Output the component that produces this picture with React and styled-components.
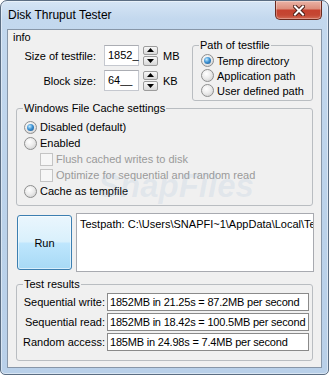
import styled, { createGlobalStyle, css } from "styled-components";

const GlobalStyle = createGlobalStyle`
  * { box-sizing: border-box; }
  html, body { margin: 0; padding: 0; background: #ffffff; }
  body {
    font-family: "Liberation Sans", Arial, sans-serif;
    font-size: 11px;
    color: #000;
  }
`;

const fileRows = [
  { label: "Size of testfile:", value: "1852_", unit: "MB" },
  { label: "Block size:", value: "64__", unit: "KB" },
];

const pathOptions = [
  { label: "Temp directory", checked: true },
  { label: "Application path" },
  { label: "User defined path" },
];

const results = [
  { label: "Sequential write:", value: "1852MB in 21.25s = 87.2MB per second" },
  { label: "Sequential read:", value: "1852MB in 18.42s = 100.5MB per second" },
  { label: "Random access:", value: "185MB in 24.98s = 7.4MB per second" },
];

function Arrow({ up }) {
  return (
    <svg width="7" height="4" viewBox="0 0 7 4">
      <polygon points={up ? "0,4 7,4 3.5,0" : "0,0 7,0 3.5,4"} fill="#000" />
    </svg>
  );
}

export default function App() {
  return (
    <>
      <GlobalStyle />
      <Window>
        <TitleBar>
          <Title>Disk Thruput Tester</Title>
          <CloseButton aria-label="Close">
            <svg width="12" height="11" viewBox="0 0 12 11">
              <path d="M2 1.5 L10 9.5 M10 1.5 L2 9.5" stroke="#4a1c14" strokeWidth="4" strokeLinecap="square" />
              <path d="M2 1.5 L10 9.5 M10 1.5 L2 9.5" stroke="#ffffff" strokeWidth="2" strokeLinecap="square" />
            </svg>
          </CloseButton>
        </TitleBar>

        <Client>
          <TopRow>
            <InfoColumn>
              <InfoCaption>info</InfoCaption>
              {fileRows.map((row) => (
                <FieldRow key={row.label}>
                  <FieldLabel>{row.label}</FieldLabel>
                  <NumberBox>{row.value}</NumberBox>
                  <Spinner>
                    <SpinHalf><Arrow up /></SpinHalf>
                    <SpinHalf><Arrow /></SpinHalf>
                  </Spinner>
                  <Unit>{row.unit}</Unit>
                </FieldRow>
              ))}
            </InfoColumn>

            <GroupBox $width={121} $height={63} $top={8}>
              <Legend>Path of testfile</Legend>
              <GroupBody $pad="1px 0 0 8px">
                {pathOptions.map((o) => (
                  <OptionRow key={o.label} $height={15}>
                    <Radio $checked={o.checked} />
                    {o.label}
                  </OptionRow>
                ))}
              </GroupBody>
            </GroupBox>
          </TopRow>

          <GroupBox $width={297} $left={8} $height={105}>
            <Legend>Windows File Cache settings</Legend>
            <GroupBody $pad="4px 0 0 7px">
              <OptionRow $height={16}>
                <Radio $checked />
                Disabled (default)
              </OptionRow>
              <OptionRow $height={16}>
                <Radio />
                Enabled
              </OptionRow>
              <OptionRow $height={16} $indent={16} $disabled>
                <CheckBox />
                Flush cached writes to disk
              </OptionRow>
              <OptionRow $height={16} $indent={16} $disabled>
                <CheckBox />
                Optimize for sequential and random read
              </OptionRow>
              <OptionRow $height={16}>
                <Radio />
                Cache as tempfile
              </OptionRow>
            </GroupBody>
          </GroupBox>

          <RunRow>
            <RunButton>Run</RunButton>
            <Memo>Testpath: C:\Users\SNAPFI~1\AppData\Local\Temp\</Memo>
          </RunRow>

          <GroupBox $width={297} $left={8} $height={84} $top={5}>
            <Legend>Test results</Legend>
            <ResultsBody>
              {results.map((r) => (
                <ResultRow key={r.label}>
                  <ResultLabel>{r.label}</ResultLabel>
                  <ResultField>{r.value}</ResultField>
                </ResultRow>
              ))}
            </ResultsBody>
          </GroupBox>
        </Client>

        <Watermark>SnapFiles</Watermark>
      </Window>
    </>
  );
}

const Window = styled.div`
  position: relative;
  width: 329px;
  height: 375px;
  display: flex;
  flex-direction: column;
  padding: 0 6px 6px;
  border: 1px solid #5b6d82;
  border-radius: 7px 7px 5px 5px;
  background: linear-gradient(180deg, #d6e5f5 0%, #c3d8ee 18px, #bbd2ea 60%, #b9d0e9 100%);
  box-shadow: inset 0 0 0 1px rgba(255, 255, 255, 0.45);
  overflow: hidden;
`;

const TitleBar = styled.div`
  display: flex;
  align-items: center;
  height: 28px;
  flex: none;
`;

const Title = styled.div`
  padding-left: 1px;
  font-size: 12px;
  color: #000;
`;

const CloseButton = styled.button`
  align-self: flex-start;
  margin-left: auto;
  width: 47px;
  height: 19px;
  padding: 0;
  display: flex;
  align-items: center;
  justify-content: center;
  border: 1px solid #6b2a1e;
  border-top: none;
  border-radius: 0 0 5px 5px;
  background: linear-gradient(180deg, #eab3a6 0%, #dd8f7d 42%, #c6422f 52%, #c44733 78%, #d36a54 100%);
  box-shadow: inset 0 0 0 1px rgba(255, 255, 255, 0.3);
`;

const Client = styled.div`
  flex: 1;
  display: flex;
  flex-direction: column;
  background: #f0f0f0;
  border: 1px solid #8796a8;
`;

const TopRow = styled.div`
  display: flex;
  align-items: flex-start;
`;

const InfoColumn = styled.div`
  width: 184px;
  display: flex;
  flex-direction: column;
  gap: 4px;
`;

const InfoCaption = styled.div`
  height: 11px;
  padding-left: 5px;
  padding-top: 1px;
  line-height: 13px;
`;

const FieldRow = styled.div`
  display: flex;
  align-items: center;
  height: 21px;
`;

const FieldLabel = styled.div`
  width: 88px;
  margin-right: 8px;
  text-align: right;
  white-space: nowrap;
`;

const NumberBox = styled.div`
  width: 35px;
  height: 21px;
  padding-left: 3px;
  line-height: 19px;
  background: #fff;
  border: 1px solid #c5c8cf;
  border-top-color: #abadb3;
`;

const Spinner = styled.div`
  display: flex;
  flex-direction: column;
  gap: 1px;
  width: 15px;
  height: 20px;
  margin-left: 4px;
`;

const SpinHalf = styled.div`
  flex: 1;
  display: flex;
  align-items: center;
  justify-content: center;
  border: 1px solid #9c9c9c;
  border-radius: 2px;
  background: linear-gradient(180deg, #f7f7f7 0%, #e8e8e8 50%, #d8d8d8 100%);
`;

const Unit = styled.div`
  margin-left: 5px;
`;

const GroupBox = styled.fieldset`
  width: ${(p) => p.$width}px;
  height: ${(p) => p.$height}px;
  margin: ${(p) => p.$top || 0}px 0 0 ${(p) => p.$left || 0}px;
  padding: 0;
  min-width: 0;
  border: 1px solid #b9bdc1;
  border-radius: 3px;
  flex: none;
`;

const Legend = styled.legend`
  margin-left: 6px;
  padding: 0 1px;
  line-height: 14px;
  font-size: 11px;
`;

const GroupBody = styled.div`
  display: flex;
  flex-direction: column;
  padding: ${(p) => p.$pad};
`;

const OptionRow = styled.div`
  display: flex;
  align-items: center;
  height: ${(p) => p.$height}px;
  padding-left: ${(p) => p.$indent || 0}px;
  color: ${(p) => (p.$disabled ? "#9a9a9a" : "#000")};
  white-space: nowrap;
`;

const Radio = styled.span`
  display: flex;
  align-items: center;
  justify-content: center;
  flex: none;
  width: 13px;
  height: 13px;
  margin-right: 3px;
  border-radius: 50%;
  border: 1px solid #8e8f8f;
  background: radial-gradient(circle at 40% 35%, #ffffff 0%, #ececec 45%, #c9c9c9 100%);

  ${(p) =>
    p.$checked &&
    css`
      &::after {
        content: "";
        width: 7px;
        height: 7px;
        border-radius: 50%;
        background: radial-gradient(circle at 38% 35%, #c4ecff 0%, #3f93d3 45%, #16508a 100%);
      }
    `}
`;

const CheckBox = styled.span`
  flex: none;
  width: 13px;
  height: 13px;
  margin-right: 3px;
  border: 1px solid #c4c4c4;
  background: #f6f6f6;
`;

const RunRow = styled.div`
  display: flex;
  align-items: center;
  margin-top: 7px;
`;

const RunButton = styled.button`
  width: 55px;
  height: 55px;
  margin-left: 9px;
  padding: 0;
  font-family: "Liberation Sans", Arial, sans-serif;
  font-size: 11px;
  color: #000;
  border: 1px solid #3c7fb1;
  border-radius: 3px;
  background: linear-gradient(180deg, #eaf6fd 0%, #d9f0fc 48%, #bee6fd 52%, #a7d9f5 100%);
  box-shadow: inset 0 0 0 1px rgba(255, 255, 255, 0.55);
`;

const Memo = styled.div`
  width: 238px;
  height: 59px;
  margin-left: 4px;
  padding: 3px 0 0 3px;
  background: #fff;
  border: 1px solid #a8aab0;
  white-space: nowrap;
  overflow: hidden;
  line-height: 14px;
`;

const ResultsBody = styled.div`
  display: flex;
  flex-direction: column;
  gap: 2px;
  padding-top: 2px;
`;

const ResultRow = styled.div`
  display: flex;
  align-items: center;
  height: 18px;
`;

const ResultLabel = styled.div`
  width: 88px;
  margin-right: 2px;
  text-align: right;
  white-space: nowrap;
`;

const ResultField = styled.div`
  width: 202px;
  height: 18px;
  padding-left: 2px;
  line-height: 16px;
  letter-spacing: -0.2px;
  background: #fff;
  border: 1px solid #8a8a8a;
  white-space: nowrap;
  overflow: hidden;
`;

const Watermark = styled.div`
  position: absolute;
  left: 97px;
  top: 166px;
  font-size: 33px;
  font-weight: bold;
  font-style: italic;
  color: rgba(150, 180, 210, 0.16);
  pointer-events: none;
  white-space: nowrap;
`;
